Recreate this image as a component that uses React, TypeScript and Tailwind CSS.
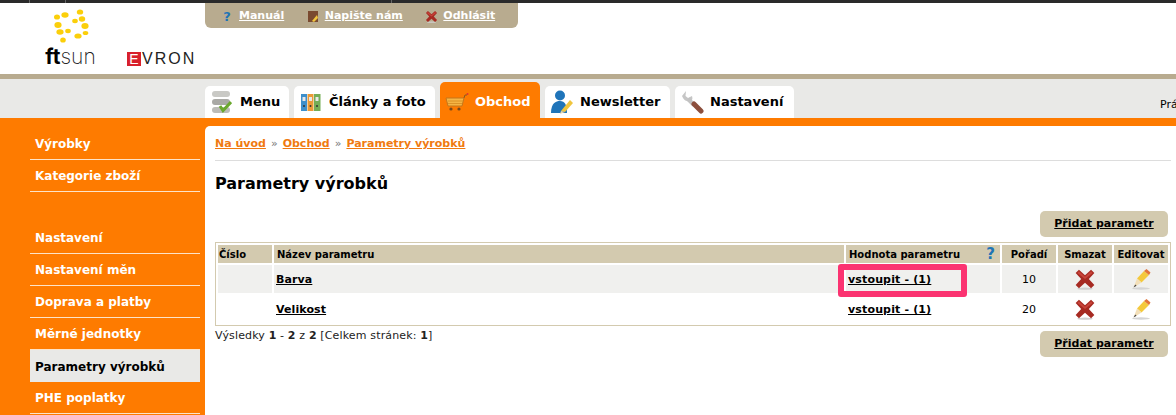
import React from 'react';

const font = { fontFamily: '"DejaVu Sans", Verdana, sans-serif' };

const RedX = ({ size = 22 }: { size?: number }) => (
  <svg width={size} height={size} viewBox="0 0 20 20" className="shrink-0">
    <ellipse cx="10" cy="18.8" rx="7" ry="1" fill="#cfcfcf" />
    <path d="M1.5 4.5 L4.5 1.5 L10 6.5 L15.5 1.5 L18.5 4.5 L13.5 10 L18.5 15.5 L15.5 18.5 L10 13.5 L4.5 18.5 L1.5 15.5 L6.5 10 Z" fill="#a62a22" />
    <path d="M3 4.5 L4.5 3 L10 8 L15.5 3 L17 4.5 L10 10 Z" fill="#c8443a" />
  </svg>
);

const Pencil = () => (
  <svg width="20" height="23" viewBox="0 0 20 22">
    <ellipse cx="10" cy="20" rx="9" ry="1.2" fill="#d4d4d4" />
    <path d="M6 10 L13 2.5 L18 6.5 L10.5 14 Z" fill="#f4c93c" />
    <path d="M13 2.5 L15.5 0.5 L19.5 4 L18 6.5 Z" fill="#e2743a" />
    <path d="M6 10 L10.5 14 L2.5 19 Z" fill="#f3dfb8" />
    <path d="M4.2 16 L2.5 19 L5.6 17.2 Z" fill="#444" />
  </svg>
);

const Question = ({ size = 15 }: { size?: number }) => (
  <span className="font-bold leading-none text-[#1f74b5]" style={{ fontSize: size }}>?</span>
);

const TopLink = ({ icon, label }: { icon: React.ReactNode; label: string }) => (
  <div className="flex items-center gap-[6px]">
    <span className="flex w-[12px] justify-center">{icon}</span>
    <a className="text-[11px] font-bold text-white underline">{label}</a>
  </div>
);

const MenuIcon = () => (
  <svg width="20" height="24" viewBox="0 0 20 24">
    <rect x="0" y="1" width="18" height="6" rx="3" fill="#c9c9c5" />
    <rect x="0" y="9" width="18" height="6" rx="3" fill="#a9a9a5" />
    <rect x="0" y="17" width="18" height="6" rx="3" fill="#bcbcb8" />
    <path d="M8 16 L11 20.5 L19 12" stroke="#6aa82e" strokeWidth="3" fill="none" />
  </svg>
);

const BindersIcon = () => (
  <svg width="20" height="20" viewBox="0 0 20 20">
    <rect x="0" y="2" width="6" height="17" fill="#3d8fcb" />
    <rect x="6.5" y="2" width="6" height="17" fill="#ea9a37" />
    <rect x="13" y="2" width="6.5" height="17" fill="#74ad56" />
    <rect x="1.5" y="5" width="3" height="4" fill="#e8e8e8" />
    <rect x="8" y="5" width="3" height="4" fill="#e8e8e8" />
    <rect x="14.5" y="5" width="3" height="4" fill="#e8e8e8" />
    <circle cx="3" cy="14" r="1" fill="#333" />
    <circle cx="9.5" cy="14" r="1" fill="#333" />
    <circle cx="16" cy="14" r="1" fill="#333" />
  </svg>
);

const CartIcon = () => (
  <svg width="24" height="20" viewBox="0 0 24 20">
    <path d="M1 6 H19 L17 14 H3 Z" fill="#f5b544" stroke="#c4761a" strokeWidth="1" />
    <path d="M3 9 H18 M3 11.5 H17" stroke="#d68a20" strokeWidth="0.8" />
    <path d="M19 6 L20 3 H22" stroke="#8a5a1f" strokeWidth="1" fill="none" />
    <circle cx="22.5" cy="2" r="1" fill="#d33" />
    <circle cx="6" cy="17" r="1.6" fill="#7a4a1a" />
    <circle cx="14" cy="17" r="1.6" fill="#7a4a1a" />
  </svg>
);

const PersonIcon = () => (
  <svg width="24" height="24" viewBox="0 0 24 24">
    <circle cx="10" cy="5.5" r="5" fill="#1f74b9" />
    <path d="M1 23 C1 13 6 11 10 11 C15 11 17 15 17 23 Z" fill="#1f74b9" />
    <path d="M11 21 L20 10 L23 13 L15 22 Z" fill="#f0c53d" />
    <path d="M11 21 L15 22 L10 24 Z" fill="#e9d6ad" />
  </svg>
);

const WrenchIcon = () => (
  <svg width="24" height="24" viewBox="0 0 24 24">
    <path d="M2 6 L6 1 L5.5 6 L8 8 L12 6 C13 9 12 10 11 11 C8 12 4 11 2 6 Z" fill="#c6c6c6" />
    <path d="M8 9 L14 15" stroke="#c2c2c2" strokeWidth="4" />
    <path d="M14 14 L21 21" stroke="#8c4f3d" strokeWidth="5" strokeLinecap="round" />
  </svg>
);

const Tab = ({ icon, label, active, w }: { icon: React.ReactNode; label: string; active?: boolean; w: string }) => (
  <div
    className={`flex items-center whitespace-nowrap rounded-t-[5px] text-[13px] font-bold ${w} ${
      active ? 'h-[36px] bg-[#fe7b00] pt-[4px] text-white' : 'h-[32px] bg-white text-black'
    }`}
  >
    <span className="flex w-[35px] shrink-0 justify-center pr-[2px]">{icon}</span>
    <span>{label}</span>
  </div>
);

const SideItem = ({ label, active }: { label: string; active?: boolean }) => (
  <div
    className={`flex h-[32px] items-center pl-[5px] pt-[1px] text-[12px] font-bold ${
      active ? 'bg-[#e9e9e7] text-black' : 'border-b border-[#fde3c8] text-white'
    }`}
  >
    {label}
  </div>
);

const AddButton = () => (
  <a className="flex h-[26px] w-[128px] items-center justify-center rounded-[5px] bg-[#d3caaf] text-[11px] font-bold text-black underline">
    Přidat parametr
  </a>
);

const Th = ({ children, className = '' }: { children?: React.ReactNode; className?: string }) => (
  <th className={`h-[18px] bg-[#d3caaf] text-[10px] font-bold text-black ${className}`}>{children}</th>
);

const sunDots = [
  [14, 7, 3.6, 2.8], [6, 9, 3, 2.6], [29, 4, 3.2, 2.6], [31, 11, 3.2, 2.8], [24, 13, 2.8, 2.2], [7, 17, 3.6, 3],
  [34, 18, 3.6, 3], [9, 24, 3.6, 2.8], [17, 23, 2.8, 2.2], [34.5, 25, 2.8, 2], [27, 28, 3.6, 2.6], [12, 32, 2.8, 2.6],
];

export default function App() {
  return (
    <div className="relative h-[415px] w-[1176px] overflow-hidden bg-white" style={font}>
      {/* window edge */}
      <div className="flex h-[3px] bg-[#2a2a2a]">
        <div className="w-[30px] border-r border-[#666]" />
        <div className="w-[36px] border-r border-[#666]" />
        <div className="w-[326px] border-r border-[#666]" />
      </div>

      {/* Header */}
      <div className="flex h-[71px]">
        <div className="flex w-[205px] shrink-0 items-end pb-[8px] pl-[45px]">
          <div className="flex w-[51px] flex-col items-center">
            <svg width="40" height="36" viewBox="0 0 40 36" className="mb-[4px]">
              {sunDots.map(([cx, cy, rx, ry], i) => (
                <ellipse key={i} cx={cx} cy={cy} rx={rx} ry={ry} fill="#fbcf0a" />
              ))}
            </svg>
            <div className="whitespace-nowrap text-[21px] leading-[18px] text-black" style={{ fontFamily: 'Inter, sans-serif' }}>
              <span className="font-bold">ft</span>
              <span className="font-extralight text-[#222]">sun</span>
            </div>
          </div>
          <div className="ml-[31px] flex items-center text-[16px] leading-[14px] text-[#222]" style={{ fontFamily: '"Liberation Sans", sans-serif' }}>
            <span className="flex h-[14px] w-[14px] items-center justify-center bg-[#d8202c] text-[14px] text-white">E</span>
            <span className="pl-[1px] tracking-[2px]">VRON</span>
          </div>
        </div>
        <div className="flex h-[25px] w-[313px] items-center gap-[22.5px] rounded-b-[6px] bg-[#b8ab8f] pl-[16px] pt-[1px]">
          <TopLink icon={<Question size={13} />} label="Manuál" />
          <TopLink
            icon={
              <svg width="12" height="13" viewBox="0 0 12 13">
                <rect x="1" y="1" width="10" height="11" fill="#7a4a30" />
                <path d="M5 11 L10 5 L11 8 L7 12 Z" fill="#f0c53d" />
              </svg>
            }
            label="Napište nám"
          />
          <TopLink icon={<RedX size={13} />} label="Odhlásit" />
        </div>
      </div>
      <div className="h-[5px] bg-[#b8ab8f]" />

      {/* Tabs */}
      <div className="relative flex h-[39px] items-end gap-[5px] bg-[#e9e9e7] pl-[205px]">
        <Tab icon={<MenuIcon />} label="Menu" w="w-[84px]" />
        <Tab icon={<BindersIcon />} label="Články a foto" w="w-[141px]" />
        <Tab icon={<CartIcon />} label="Obchod" active w="w-[100px]" />
        <Tab icon={<PersonIcon />} label="Newsletter" w="w-[125px]" />
        <Tab icon={<WrenchIcon />} label="Nastavení" w="w-[119px]" />
        <span className="absolute left-[1160px] top-[18px] text-[11px] text-black">Prá</span>
      </div>

      {/* Body */}
      <div className="flex h-[297px] bg-[#fe7b00] pt-[8px]">
        <aside className="mt-[2px] w-[205px] shrink-0 pl-[30px] pr-[5px]">
          <SideItem label="Výrobky" />
          <SideItem label="Kategorie zboží" />
          <div className="h-[30px]" />
          <SideItem label="Nastavení" />
          <SideItem label="Nastavení měn" />
          <SideItem label="Doprava a platby" />
          <SideItem label="Měrné jednotky" />
          <SideItem label="Parametry výrobků" active />
          <SideItem label="PHE poplatky" />
        </aside>

        <main className="flex-1 rounded-tl-[5px] bg-white pl-[10px] pr-[5px]">
          <div className="flex h-[35px] items-center gap-[5px] border-b border-[#ddd] pt-[2px] text-[11px]">
            <a className="font-bold text-[#f07a10] underline">Na úvod</a>
            <span className="text-[#777]">»</span>
            <a className="font-bold text-[#f07a10] underline">Obchod</a>
            <span className="text-[#777]">»</span>
            <a className="font-bold text-[#f07a10] underline">Parametry výrobků</a>
          </div>
          <h1 className="mt-[13px] text-[16px] font-bold leading-[20px] text-black">Parametry výrobků</h1>

          <div className="mr-[3px] mt-[17px] flex justify-end">
            <AddButton />
          </div>

          <div className="mt-[5px] border border-[#d3caaf]">
            <table className="w-full table-fixed border-separate border-spacing-[2px] text-[11px] text-black">
              <colgroup>
                <col className="w-[54px]" />
                <col />
                <col className="w-[154px]" />
                <col className="w-[54px]" />
                <col className="w-[54px]" />
                <col className="w-[54px]" />
              </colgroup>
              <thead>
                <tr>
                  <Th className="pl-[1px] text-left">Číslo</Th>
                  <Th className="pl-[3px] text-left">Název parametru</Th>
                  <Th className="pl-[3px] text-left">
                    <div className="flex items-center justify-between pr-[5px]">
                      Hodnota parametru <Question />
                    </div>
                  </Th>
                  <Th>Pořadí</Th>
                  <Th>Smazat</Th>
                  <Th>Editovat</Th>
                </tr>
              </thead>
              <tbody>
                {[
                  { name: 'Barva', order: 10, hl: true },
                  { name: 'Velikost', order: 20, hl: false },
                ].map((r) => (
                  <tr key={r.name} className={r.hl ? 'h-[28px] bg-[#f0f0ee]' : 'h-[28px]'}>
                    <td />
                    <td className="px-[2px] pt-[3px] font-bold tracking-[0.1px] underline">{r.name}</td>
                    <td className="relative px-[2px] pt-[3px] font-bold tracking-[0.15px] underline">
                      vstoupit - (1)
                      {r.hl && (
                        <span className="absolute -left-[8px] -top-[1px] h-[33px] w-[129px] rounded-[3px] border-[6px] border-[#fb3371]" />
                      )}
                    </td>
                    <td className="pt-[3px] text-center">{r.order}</td>
                    <td className="p-0">
                      <div className="flex justify-center">
                        <RedX />
                      </div>
                    </td>
                    <td className="p-0">
                      <div className="flex justify-center">
                        <Pencil />
                      </div>
                    </td>
                  </tr>
                ))}
              </tbody>
            </table>
          </div>

          <div className="mr-[3px] flex justify-between pt-[1px]">
            <p className="text-[11px] leading-[18px] tracking-[0.15px] text-[#222]">
              Výsledky <b>1</b> - <b>2</b> z <b>2</b> [Celkem stránek: <b>1</b>]
            </p>
            <div className="mt-[4px]">
              <AddButton />
            </div>
          </div>
        </main>
      </div>
    </div>
  );
}
